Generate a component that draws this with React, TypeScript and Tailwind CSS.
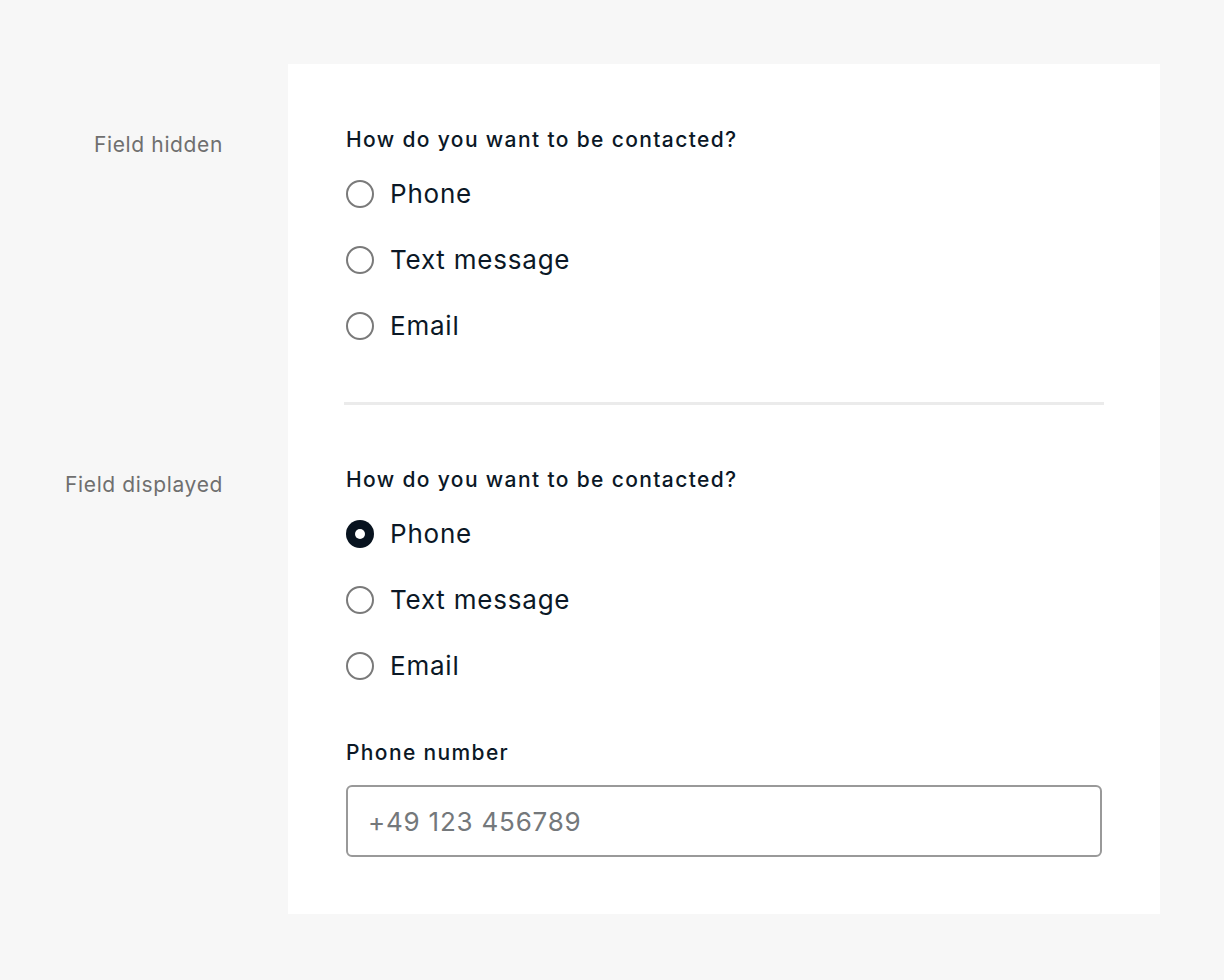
import React from "react";

const font = { fontFamily: "Inter, 'Noto Sans', sans-serif" };

function Radio({ label, checked }: { label: string; checked?: boolean }) {
  return (
    <div className="flex h-[34px] items-center">
      {checked ? (
        <span className="ml-[2px] flex h-[28px] w-[28px] items-center justify-center rounded-full bg-[#08131f]">
          <span className="h-[10px] w-[10px] rounded-full bg-white" />
        </span>
      ) : (
        <span className="ml-[2px] box-border h-[28px] w-[28px] rounded-full border-[2px] border-[#7a7a7a]" />
      )}
      <span className="ml-[16px] text-[26px] leading-[34px] tracking-[0.03em] text-[#0b1826]">{label}</span>
    </div>
  );
}

function Group({ checked }: { checked?: boolean }) {
  return (
    <div>
      <div className="ml-[2px] text-[21px] font-medium leading-[28px] tracking-[0.065em] text-[#0b1826]">
        How do you want to be contacted?
      </div>
      <div className="mt-[23px] flex flex-col gap-[32px]">
        <Radio label="Phone" checked={checked} />
        <Radio label="Text message" />
        <Radio label="Email" />
      </div>
    </div>
  );
}

export default function App() {
  return (
    <div className="min-h-[980px] bg-[#f7f7f7] pt-[64px]" style={font}>
      <div className="flex">
        <div className="flex w-[288px] shrink-0 flex-col items-end pr-[65px] text-[21px] leading-[28px] tracking-[0.03em] text-[#6f6f6f]">
          <div className="mt-[67px]">Field hidden</div>
          <div className="mt-[312px]">Field displayed</div>
        </div>
        <div className="w-[872px] bg-white px-[56px] pb-[57px] pt-[62px]">
          <Group />
          <div className="mt-[59px] h-[3px] bg-[#ebebeb]" />
          <div className="mt-[61px]">
            <Group checked />
          </div>
          <div className="ml-[2px] mt-[56px] text-[21px] font-medium leading-[28px] tracking-[0.065em] text-[#0b1826]">
            Phone number
          </div>
          <div className="mx-[2px] mt-[18px] flex h-[72px] items-center rounded-[6px] border-[2px] border-[#999999] px-[20px] text-[26px] tracking-[0.03em] text-[#74787b]">
            +49 123 456789
          </div>
        </div>
      </div>
    </div>
  );
}
